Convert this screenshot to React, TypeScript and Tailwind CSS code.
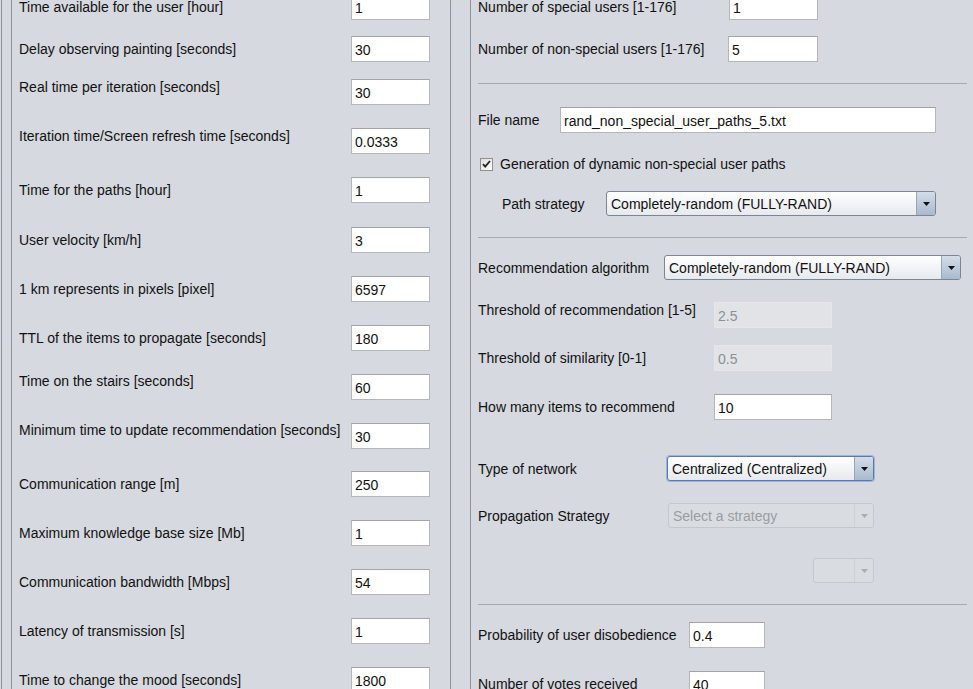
import React from "react";

type LeftRow = { label: string; value: string; gap: number; lift?: string };

const leftRows: LeftRow[] = [
  { label: "Time available for the user [hour]", value: "1", gap: -6 },
  { label: "Delay observing painting [seconds]", value: "30", gap: 16 },
  { label: "Real time per iteration [seconds]", value: "30", gap: 17, lift: "mb-[10px]" },
  { label: "Iteration time/Screen refresh time [seconds]", value: "0.0333", gap: 23, lift: "mb-[10px]" },
  { label: "Time for the paths [hour]", value: "1", gap: 23 },
  { label: "User velocity [km/h]", value: "3", gap: 24 },
  { label: "1 km represents in pixels [pixel]", value: "6597", gap: 23 },
  { label: "TTL of the items to propagate [seconds]", value: "180", gap: 23 },
  { label: "Time on the stairs [seconds]", value: "60", gap: 23, lift: "mb-[12px]" },
  { label: "Minimum time to update recommendation [seconds]", value: "30", gap: 23, lift: "mb-[12px]" },
  { label: "Communication range [m]", value: "250", gap: 22 },
  { label: "Maximum knowledge base size [Mb]", value: "1", gap: 23 },
  { label: "Communication bandwidth [Mbps]", value: "54", gap: 23 },
  { label: "Latency of transmission [s]", value: "1", gap: 23 },
  { label: "Time to change the mood [seconds]", value: "1800", gap: 23 },
];

const Field: React.FC<{ value: string; width: string; disabled?: boolean }> = ({ value, width, disabled }) => (
  <div
    className={`${width} h-[26px] shrink-0 flex items-center pl-[3px] pt-[1px] border ${
      disabled
        ? "bg-[#e1e3e7] border-[#e4e6e9] text-[#8d9096]"
        : "bg-white border-[#b4b6ba] border-t-[#a2a4a8] text-[#111]"
    }`}
  >
    {value}
  </div>
);

const Arrow: React.FC<{ disabled?: boolean }> = ({ disabled }) => (
  <svg width="7" height="4" viewBox="0 0 7 4">
    <path d="M0 0H7L3.5 4Z" fill={disabled ? "#a9adb3" : "#111"} />
  </svg>
);

const Combo: React.FC<{ value?: string; width: string; disabled?: boolean; focused?: boolean }> = ({
  value,
  width,
  disabled,
  focused,
}) => (
  <div
    className={`${width} h-[25px] shrink-0 flex rounded-[3px] border overflow-hidden ${
      disabled
        ? "border-[#c4c8ce] bg-[#d9dce1] text-[#9a9ea4]"
        : focused
        ? "border-[#5a79b0] bg-gradient-to-b from-white to-[#e6e9ee] text-[#111] shadow-[0_0_0_1px_#9fb3d6]"
        : "border-[#7d8590] bg-gradient-to-b from-white to-[#e6e9ee] text-[#111]"
    }`}
  >
    <div className="flex-1 flex items-center pl-[4px] whitespace-nowrap overflow-hidden">{value}</div>
    <div
      className={`w-[19px] flex items-center justify-center border-l rounded-r-[2px] ${
        disabled
          ? "border-[#cdd0d5] bg-[#d9dce1]"
          : "border-[#9aa6b4] bg-gradient-to-b from-[#d3dde9] to-[#a9bace]"
      }`}
    >
      <Arrow disabled={disabled} />
    </div>
  </div>
);

const Sep: React.FC<{ mt: string }> = ({ mt }) => <div className={`${mt} h-px bg-[#a6aab0] mr-[6px]`} />;

export default function App() {
  return (
    <div className="flex h-[689px] w-[973px] overflow-hidden bg-[#d6d9df] font-['Liberation_Sans',Arial,sans-serif] text-[14px] leading-[16px] text-[#111]">
      <div className="ml-px w-px shrink-0 bg-[#8f949b]" />
      <div className="w-[9px] shrink-0" />

      {/* left column */}
      <div className="w-[440px] shrink-0 border-l border-r border-[#8f949b] pl-[7px]">
        {leftRows.map((r) => (
          <div key={r.label} className="flex items-center h-[26px]" style={{ marginTop: r.gap }}>
            <div className={`w-[332px] shrink-0 whitespace-nowrap ${r.lift ?? ""}`}>{r.label}</div>
            <Field value={r.value} width="w-[79px]" />
          </div>
        ))}
      </div>

      <div className="w-[19px] shrink-0" />

      {/* right column */}
      <div className="flex-1 border-l border-[#8f949b] pl-[7px]">
        <div className="flex items-center h-[26px] -mt-[6px]">
          <div className="w-[251px] shrink-0">Number of special users [1-176]</div>
          <Field value="1" width="w-[89px]" />
        </div>
        <div className="flex items-center h-[26px] mt-[16px]">
          <div className="w-[250px] shrink-0">Number of non-special users [1-176]</div>
          <Field value="5" width="w-[90px]" />
        </div>

        <Sep mt="mt-[21px]" />

        <div className="flex items-center h-[26px] mt-[23px]">
          <div className="w-[82px] shrink-0">File name</div>
          <Field value="rand_non_special_user_paths_5.txt" width="w-[376px]" />
        </div>

        <div className="flex items-center h-[20px] mt-[21px] pl-[2px]">
          <svg width="13" height="13" viewBox="0 0 13 13" className="shrink-0">
            <defs>
              <linearGradient id="cb" x1="0" y1="0" x2="1" y2="1">
                <stop offset="0" stopColor="#dcdcdc" />
                <stop offset="1" stopColor="#ffffff" />
              </linearGradient>
            </defs>
            <rect x="0.5" y="0.5" width="12" height="12" fill="url(#cb)" stroke="#8e8f8f" />
            <path d="M3 6.2 L5.2 8.6 L10 3" fill="none" stroke="#222" strokeWidth="1.8" />
          </svg>
          <span className="ml-[7px]">Generation of dynamic non-special user paths</span>
        </div>

        <div className="flex items-center h-[25px] mt-[17px] pl-[24px]">
          <div className="w-[104px] shrink-0">Path strategy</div>
          <Combo value="Completely-random (FULLY-RAND)" width="w-[330px]" />
        </div>

        <Sep mt="mt-[21px]" />

        <div className="flex items-center h-[25px] mt-[17px]">
          <div className="w-[186px] shrink-0">Recommendation algorithm</div>
          <Combo value="Completely-random (FULLY-RAND)" width="w-[297px]" />
        </div>

        <div className="flex items-center h-[26px] mt-[22px]">
          <div className="w-[236px] shrink-0 mb-[10px]">Threshold of recommendation [1-5]</div>
          <Field value="2.5" width="w-[118px]" disabled />
        </div>
        <div className="flex items-center h-[26px] mt-[17px]">
          <div className="w-[236px] shrink-0">Threshold of similarity [0-1]</div>
          <Field value="0.5" width="w-[118px]" disabled />
        </div>
        <div className="flex items-center h-[26px] mt-[23px]">
          <div className="w-[236px] shrink-0">How many items to recommend</div>
          <Field value="10" width="w-[118px]" />
        </div>

        <div className="flex items-center h-[25px] mt-[36px]">
          <div className="w-[189px] shrink-0">Type of network</div>
          <Combo value="Centralized (Centralized)" width="w-[207px]" focused />
        </div>
        <div className="flex items-center h-[25px] mt-[22px]">
          <div className="w-[190px] shrink-0">Propagation Strategy</div>
          <Combo value="Select a strategy" width="w-[206px]" disabled />
        </div>
        <div className="flex items-center h-[25px] mt-[30px] pl-[335px]">
          <Combo width="w-[61px]" disabled />
        </div>

        <Sep mt="mt-[21px]" />

        <div className="flex items-center h-[26px] mt-[17px]">
          <div className="w-[211px] shrink-0">Probability of user disobedience</div>
          <Field value="0.4" width="w-[76px]" />
        </div>
        <div className="flex items-center h-[26px] mt-[23px]">
          <div className="w-[211px] shrink-0">Number of votes received</div>
          <Field value="40" width="w-[76px]" />
        </div>
      </div>
    </div>
  );
}
